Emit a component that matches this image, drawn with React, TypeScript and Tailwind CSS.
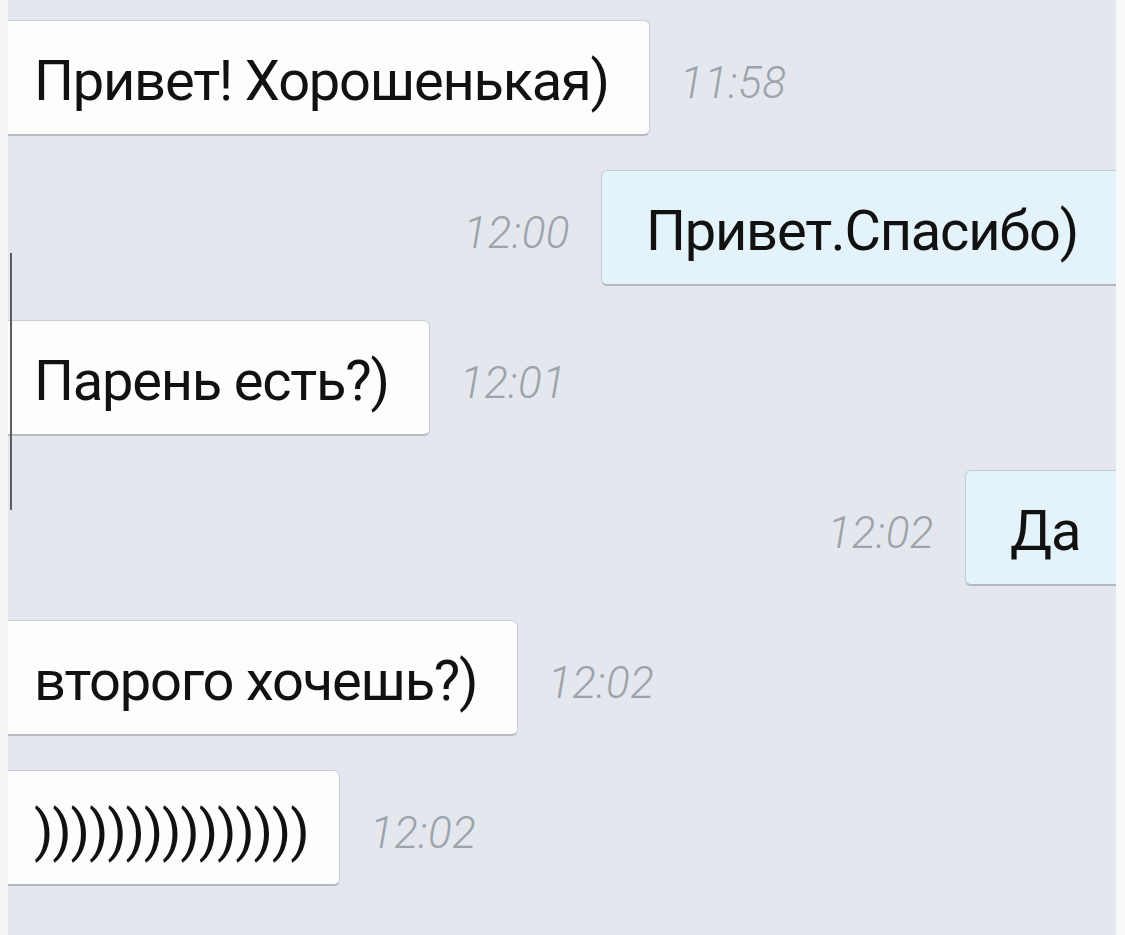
type Msg = {
  id: number
  text: string
  time: string
  mine?: boolean
  width: number
}

const messages: Msg[] = [
  { id: 1, text: 'Привет! Хорошенькая)', time: '11:58', width: 642 },
  { id: 2, text: 'Привет.Спасибо)', time: '12:00', mine: true, width: 515 },
  { id: 3, text: 'Парень есть?)', time: '12:01', width: 422 },
  { id: 4, text: 'Да', time: '12:02', mine: true, width: 151 },
  { id: 5, text: 'второго хочешь?)', time: '12:02', width: 510 },
  { id: 6, text: ')))))))))))))))', time: '12:02', width: 332 },
]

const Time = ({ value }: { value: string }) => (
  <span className="pt-[10px] text-[44px] leading-none font-light italic text-[#9da3aa] tracking-[0.5px]">
    {value}
  </span>
)

const Bubble = ({ msg }: { msg: Msg }) => (
  <div
    style={{ width: msg.width }}
    className={
      msg.mine
        ? 'h-[116px] flex items-center pt-[6px] pl-[44px] bg-[#e4f2fa] border border-[#c3cbd2] border-r-0 border-b-2 border-b-[#b3bac1] rounded-l-[6px]'
        : 'h-[116px] flex items-center pt-[6px] pl-[26px] bg-[#fdfdfd] border border-[#c9ced4] border-l-0 border-b-2 border-b-[#b5bac0] rounded-r-[6px]'
    }
  >
    <span className="text-[56px] leading-none text-[#111] tracking-[-1.2px] whitespace-nowrap">
      {msg.text}
    </span>
  </div>
)

export default function App() {
  return (
    <div className="w-[1125px] h-[935px] flex overflow-hidden font-['Roboto',_'Liberation_Sans',_sans-serif]">
      <div className="w-[8px] bg-[#f3f4f6]" />
      <div className="relative flex-1 bg-[#e4e8ee] flex flex-col gap-[34px] pt-[20px]">
        {messages.map((m) =>
          m.mine ? (
            <div key={m.id} className="flex items-center justify-end gap-[31px]">
              <Time value={m.time} />
              <Bubble msg={m} />
            </div>
          ) : (
            <div key={m.id} className="flex items-center gap-[30px]">
              <Bubble msg={m} />
              <Time value={m.time} />
            </div>
          )
        )}
        <div className="absolute left-[2px] top-[253px] w-[2px] h-[257px] bg-[#5a5d61]" />
      </div>
      <div className="w-[9px] bg-[#f8f9fa]" />
    </div>
  )
}
